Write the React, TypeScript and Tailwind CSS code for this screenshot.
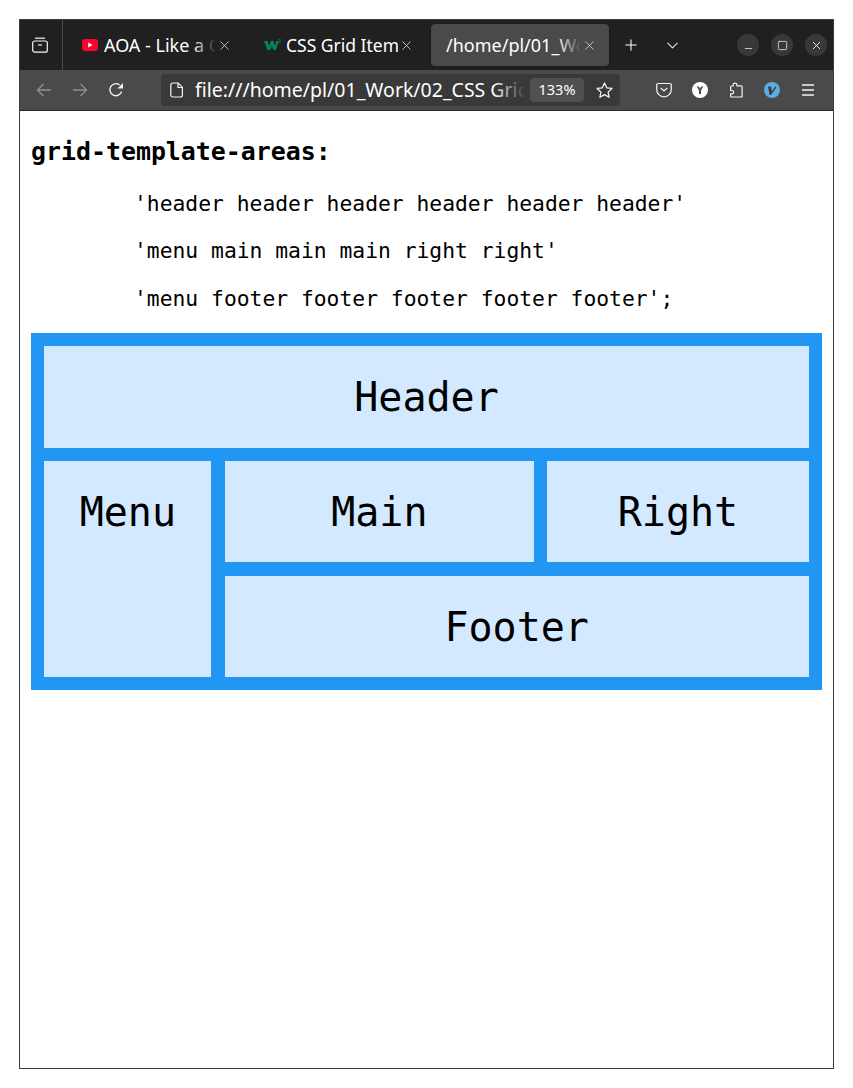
import { ChevronDown, Minus, Plus, Square, X } from "lucide-react";

const UI_FONT = "font-['Noto_Sans',sans-serif]";
const MONO_FONT = "font-['DejaVu_Sans_Mono',monospace]";

// Tab title with the fade-out Firefox puts on long titles
function TabTitle({ text, className, fade }: { text: string; className: string; fade?: string }) {
  return (
    <span className={`relative overflow-hidden whitespace-nowrap leading-6 text-white ${className}`}>
      {text}
      {fade && <span className={`absolute inset-y-0 right-0 w-6 bg-gradient-to-r from-transparent ${fade}`} />}
    </span>
  );
}

function TabClose() {
  return <X size={15} strokeWidth={1.2} className="shrink-0 text-[#e8e8e8]" />;
}

function WindowButton({ children }: { children: React.ReactNode }) {
  return (
    <div className="flex h-[22px] w-[22px] items-center justify-center rounded-full bg-[#383838] text-white">
      {children}
    </div>
  );
}

function TitleBar() {
  return (
    <div className="flex h-[50px] items-center bg-[#202020]">
      <div className="flex h-full w-[43px] shrink-0 items-center justify-center border-r border-[#4c4c4c]">
        {/* firefox view */}
        <svg width="16" height="16" viewBox="0 0 16 16" fill="none" stroke="#f4f4f4" strokeWidth="1.2" className="mr-[2px]">
          <path d="M3 1.2h10" />
          <rect x="0.7" y="4" width="14.6" height="11.2" rx="2" />
          <path d="M6 8h4" />
        </svg>
      </div>

      <div className="ml-[19px] flex w-[150px] shrink-0 items-center">
        <svg width="16" height="12" viewBox="0 0 16 12" className="mr-[6px] shrink-0">
          <rect width="16" height="12" rx="3" fill="#ff0033" />
          <path d="M6.2 3.4 10.6 6 6.2 8.6z" fill="#fff" />
        </svg>
        <TabTitle text="AOA - Like a Cat" className="w-[114px] text-[18px]" fade="to-[#202020]" />
        <span className="ml-[1px]"><TabClose /></span>
      </div>

      <div className="ml-[32px] flex w-[150px] shrink-0 items-center">
        <svg width="17" height="12" viewBox="0 0 17 12" className="mr-[5px] shrink-0">
          <path d="M0 2h3.6l1.6 5 1.7-5h2.4l1.7 5 1.5-5H15l-3.2 9H9.4L7.9 6.4 6.3 11H3.4z" fill="#04845f" />
          <path d="M14.6 0.6h1.9l-1 1.3c.7 0 1.1.3 1.1.9 0 .8-1 1.1-1.9.7" fill="none" stroke="#04845f" strokeWidth="0.8" />
        </svg>
        <TabTitle text="CSS Grid Item" className="w-[114px] text-[17.5px]" />
        <span className="ml-[1px]"><TabClose /></span>
      </div>

      <div className="ml-[17px] flex h-[42px] w-[178px] shrink-0 items-center rounded-[4px] bg-[#4a4a4a] pl-[15px] shadow-[0_0_2px_rgba(0,0,0,0.4)]">
        <TabTitle text="/home/pl/01_Work" className="w-[135px] text-[18px]" fade="to-[#4a4a4a]" />
        <span className="ml-[1px]"><TabClose /></span>
      </div>

      <Plus size={18} strokeWidth={1.4} className="ml-[13px] shrink-0 text-white" />
      <ChevronDown size={19} strokeWidth={1.3} className="ml-[23px] shrink-0 text-[#e8e8e8]" />

      <div className="ml-[55px] flex gap-[12px]">
        <WindowButton><Minus size={11} strokeWidth={1.5} className="mt-[6px]" /></WindowButton>
        <WindowButton><Square size={11} strokeWidth={1.5} /></WindowButton>
        <WindowButton><X size={13} strokeWidth={1.6} /></WindowButton>
      </div>
    </div>
  );
}

function ToolBar() {
  return (
    <div className="flex h-[41px] items-center border-b border-[#2a2a2a] bg-[#4a4a4a]">
      {/* back / forward are disabled */}
      <svg width="16" height="16" viewBox="0 0 16 16" fill="none" stroke="#8f8f8f" strokeWidth="1.3" className="ml-4 shrink-0">
        <path d="M15 8H1.5M7.5 2 1.5 8l6 6" />
      </svg>
      <svg width="16" height="16" viewBox="0 0 16 16" fill="none" stroke="#8f8f8f" strokeWidth="1.3" className="ml-5 shrink-0">
        <path d="M1 8h13.5M8.5 2l6 6-6 6" />
      </svg>
      <svg width="16" height="16" viewBox="0 0 16 16" fill="none" className="ml-5 shrink-0">
        <path d="M13.6 9.5A6 6 0 1 1 11.6 3" stroke="#f4f4f4" strokeWidth="1.3" />
        <path d="M15 1v5.5H9.5z" fill="#f4f4f4" />
      </svg>

      <div className="ml-[37px] flex h-8 w-[459px] shrink-0 items-center rounded-[4px] bg-[#393939]">
        <svg width="14" height="16" viewBox="0 0 14 16" fill="none" stroke="#f4f4f4" strokeWidth="1.2" className="ml-[9px] shrink-0">
          <path d="M2.8 1h5.4L12.4 5.2V13a2 2 0 0 1-2 2H2.8a2 2 0 0 1-2-2V3a2 2 0 0 1 2-2z" />
          <path d="M8 1v4.5h4.5" />
        </svg>
        <span className="relative ml-[11px] w-[330px] overflow-hidden whitespace-nowrap text-[19.5px] leading-6 text-white">
          file:///home/pl/01_Work/02_CSS Grid Layout
          <span className="absolute inset-y-0 right-0 w-8 bg-gradient-to-r from-transparent to-[#393939]" />
        </span>
        <span className="ml-[5px] flex h-6 w-[54px] shrink-0 items-center justify-center rounded-[4px] bg-[#505050] text-[14.5px] text-white">
          133%
        </span>
        <svg width="17" height="17" viewBox="0 0 16 16" fill="none" stroke="#f4f4f4" strokeWidth="1.2" className="ml-3 shrink-0">
          <path d="M8 1l2.1 4.5 4.9.6-3.6 3.4.9 4.9L8 11.9l-4.3 2.5.9-4.9L1 6.1l4.9-.6z" strokeLinejoin="round" />
        </svg>
      </div>

      {/* pocket */}
      <svg width="16" height="16" viewBox="0 0 16 16" fill="none" stroke="#f4f4f4" strokeWidth="1.2" className="ml-[36px] shrink-0">
        <path d="M2.2 1.5h11.6a1.5 1.5 0 0 1 1.5 1.5v4.5a7.3 7.3 0 0 1-14.6 0V3a1.5 1.5 0 0 1 1.5-1.5z" />
        <path d="M4.8 6 8 9l3.2-3" />
      </svg>
      {/* yomitan style badge */}
      <svg width="16" height="16" viewBox="0 0 16 16" className="ml-5 shrink-0">
        <circle cx="8" cy="8" r="8" fill="#fff" />
        <path d="M4.8 4.5h2l1.2 2.2 1.2-2.2h2L9 8.6V12H7V8.6z" fill="#4a4a4a" />
      </svg>
      {/* extensions */}
      <svg width="16" height="16" viewBox="0 0 16 16" fill="none" stroke="#f4f4f4" strokeWidth="1.2" className="ml-5 shrink-0">
        <path d="M7 1.2c1.2 0 1.9.9 1.9 1.8v.9h4.2a1 1 0 0 1 1 1V15H3.6a1 1 0 0 1-1-1v-2.2h1.3a1.6 1.6 0 0 0 0-3.3H2.6V5a1 1 0 0 1 1-1h1.6V3c0-.9.6-1.8 1.8-1.8z" strokeLinejoin="round" />
      </svg>
      {/* vimium style badge */}
      <svg width="16" height="16" viewBox="0 0 16 16" className="ml-5 shrink-0">
        <circle cx="8" cy="8" r="8" fill="#5dade2" />
        <path d="M4 4.5h3.2l.5 5L12.5 3l-.8 3.5L7 13H5.6z" fill="#3d3d3d" />
      </svg>
      <svg width="16" height="16" viewBox="0 0 16 16" fill="none" stroke="#f4f4f4" strokeWidth="1.3" className="ml-5 shrink-0">
        <path d="M2 3h12M2 8h12M2 13h12" />
      </svg>
    </div>
  );
}

function Area({ label, className = "" }: { label: string; className?: string }) {
  return (
    <div className={`bg-[#d2e9ff] pt-[28px] text-center text-[40px] leading-[47px] text-black ${className}`}>
      {label}
    </div>
  );
}

export default function App() {
  return (
    <div className={`min-h-[1088px] bg-white pl-[19px] pt-[19px] ${UI_FONT}`}>
      <div className="flex h-[1050px] w-[815px] flex-col border border-[#3c3c3c] bg-white">
        <TitleBar />
        <ToolBar />

        <main className={`flex-1 px-[11px] ${MONO_FONT} text-black`}>
          <h1 className="mt-[26px] text-[24.9px] font-bold leading-[30px]">grid-template-areas:</h1>
          <div className="mt-[23.9px] flex flex-col gap-[22.5px] pl-[103px] text-[21.33px] leading-[25px]">
            <p>'header header header header header header'</p>
            <p>'menu main main main right right'</p>
            <p>'menu footer footer footer footer footer';</p>
          </div>

          <div className="mt-[22.1px] grid w-[791px] grid-cols-[167px_309.33px_1fr] grid-rows-[101.33px_101.33px_101.33px] gap-[13.33px] bg-[#2196f3] p-[13.33px]">
            <Area label="Header" className="col-span-3" />
            <Area label="Menu" className="row-span-2" />
            <Area label="Main" />
            <Area label="Right" />
            <Area label="Footer" className="col-span-2" />
          </div>
        </main>
      </div>
    </div>
  );
}
